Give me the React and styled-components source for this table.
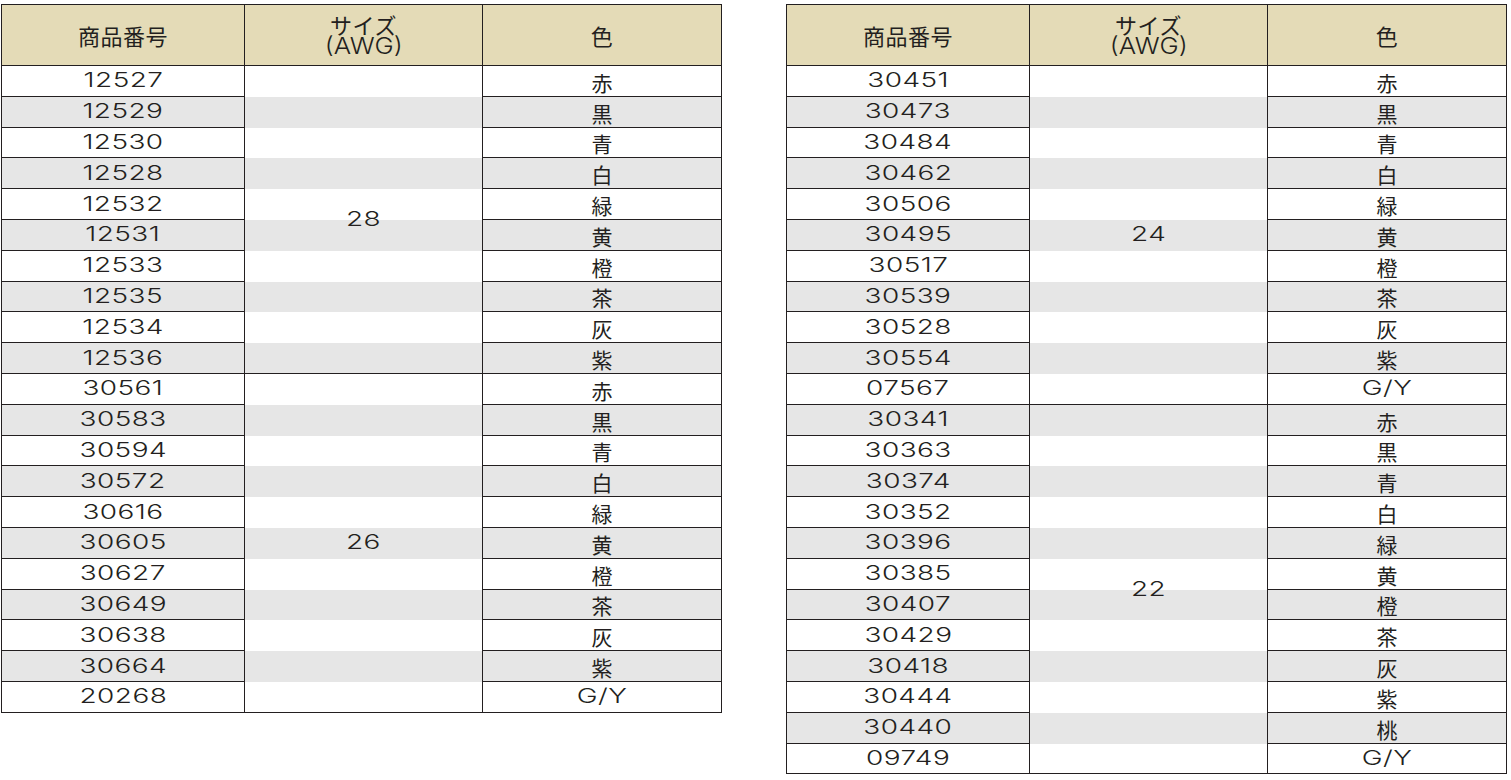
import React from "react";
import styled, { createGlobalStyle } from "styled-components";

const GlobalStyle = createGlobalStyle`
  html, body {
    margin: 0;
    padding: 0;
    background: #ffffff;
  }
  body {
    font-family: "Noto Sans CJK JP", "Noto Sans", sans-serif;
    color: #231f20;
  }
`;

const LINE = "#231f20";

const tables = [
  {
    groups: [
      {
        size: "28",
        items: [
          ["12527", "赤"], ["12529", "黒"], ["12530", "青"], ["12528", "白"], ["12532", "緑"],
          ["12531", "黄"], ["12533", "橙"], ["12535", "茶"], ["12534", "灰"], ["12536", "紫"],
        ],
      },
      {
        size: "26",
        items: [
          ["30561", "赤"], ["30583", "黒"], ["30594", "青"], ["30572", "白"], ["30616", "緑"],
          ["30605", "黄"], ["30627", "橙"], ["30649", "茶"], ["30638", "灰"], ["30664", "紫"],
          ["20268", "G/Y"],
        ],
      },
    ],
  },
  {
    groups: [
      {
        size: "24",
        items: [
          ["30451", "赤"], ["30473", "黒"], ["30484", "青"], ["30462", "白"], ["30506", "緑"],
          ["30495", "黄"], ["30517", "橙"], ["30539", "茶"], ["30528", "灰"], ["30554", "紫"],
          ["07567", "G/Y"],
        ],
      },
      {
        size: "22",
        items: [
          ["30341", "赤"], ["30363", "黒"], ["30374", "青"], ["30352", "白"], ["30396", "緑"],
          ["30385", "黄"], ["30407", "橙"], ["30429", "茶"], ["30418", "灰"], ["30444", "紫"],
          ["30440", "桃"], ["09749", "G/Y"],
        ],
      },
    ],
  },
];

const Page = styled.div`
  display: flex;
  align-items: flex-start;
  gap: 64px;
  padding: 4px 0 0 1px;
`;

const Table = styled.div`
  display: grid;
  grid-template-columns: 243px 238px 239px;
  grid-template-rows: 61px;
  grid-auto-rows: 30.8px;
  border-top: 1px solid ${LINE};
  border-left: 1px solid ${LINE};
`;

const HeadCell = styled.div`
  grid-row: 1;
  display: flex;
  flex-direction: column;
  align-items: center;
  justify-content: center;
  background: #e4dbb7;
  border-right: 1px solid ${LINE};
  border-bottom: 1px solid ${LINE};
  font-size: 22px;
  line-height: 22px;
  letter-spacing: 0.5px;
`;

const HeadLine = styled.div`
  display: block;
  height: 22px;
  line-height: 22px;
`;

const Stripe = styled.div`
  grid-column: 1 / -1;
  grid-row: ${(p) => p.$row};
  background: ${(p) => (p.$shade ? "#e6e6e6" : "#ffffff")};
`;

const Cell = styled.div`
  grid-row: ${(p) => p.$row};
  grid-column: ${(p) => p.$col};
  display: flex;
  align-items: center;
  justify-content: center;
  border-right: 1px solid ${LINE};
  border-bottom: 1px solid ${LINE};
  font-size: 21px;
  line-height: 1;
  padding-top: ${(p) => (p.$kanji ? "3px" : "0")};
`;

const SizeCell = styled.div`
  grid-column: 2;
  grid-row: ${(p) => p.$row} / span ${(p) => p.$span};
  display: flex;
  align-items: center;
  justify-content: center;
  border-right: 1px solid ${LINE};
  border-bottom: 1px solid ${LINE};
`;

const Latin = styled.span`
  display: inline-block;
  font-family: "Inter", "DejaVu Sans", sans-serif;
  font-weight: 300;
  font-size: 20px;
  line-height: 1;
  letter-spacing: 0.3px;
  transform: scaleX(1.4);
  margin-bottom: 1px;
`;

const SubHead = styled(Latin)`
  display: block;
  margin: 0;
  height: 22px;
  font-size: 23px;
  line-height: 22px;
  letter-spacing: 0;
  transform: scaleX(1.12);
`;

const isLatin = (s) => /^[0-9A-Z/()]+$/.test(s);

const DataTable = ({ groups }) => {
  let row = 2;
  const parts = [];
  groups.forEach((group, gi) => {
    const start = row;
    group.items.forEach(([code, color]) => {
      const r = row;
      const shade = (r - 2) % 2 === 1;
      parts.push(<Stripe key={`s${r}`} $row={r} $shade={shade} />);
      parts.push(
        <Cell key={`c${r}`} $row={r} $col={1}>
          <Latin>{code}</Latin>
        </Cell>
      );
      parts.push(
        <Cell key={`k${r}`} $row={r} $col={3} $kanji={!isLatin(color)}>
          {isLatin(color) ? <Latin>{color}</Latin> : color}
        </Cell>
      );
      row += 1;
    });
    parts.push(
      <SizeCell key={`g${gi}`} $row={start} $span={group.items.length}>
        <Latin>{group.size}</Latin>
      </SizeCell>
    );
  });

  return (
    <Table>
      <HeadCell>商品番号</HeadCell>
      <HeadCell>
        <HeadLine>サイズ</HeadLine>
        <SubHead>(AWG)</SubHead>
      </HeadCell>
      <HeadCell>色</HeadCell>
      {parts}
    </Table>
  );
};

export default function App() {
  return (
    <>
      <GlobalStyle />
      <Page>
        {tables.map((t, i) => (
          <DataTable key={i} groups={t.groups} />
        ))}
      </Page>
    </>
  );
}
